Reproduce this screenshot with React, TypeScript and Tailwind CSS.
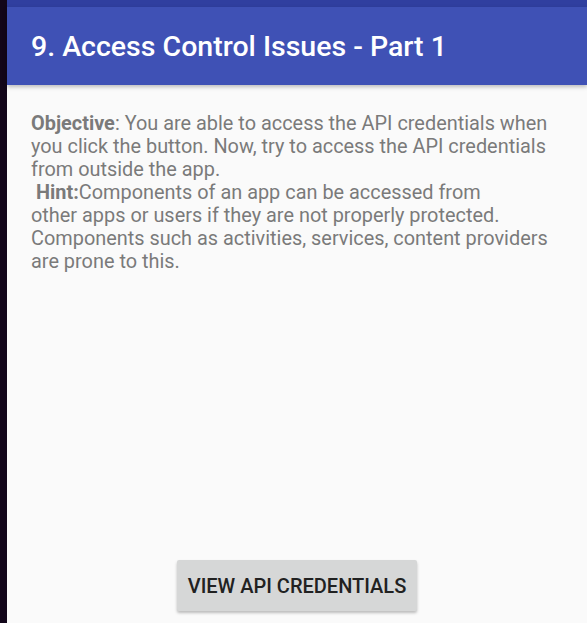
const lines = [
  <><span className="font-bold">Objective</span>: You are able to access the API credentials when</>,
  <>you click the button. Now, try to access the API credentials</>,
  <>from outside the app.</>,
  <>&nbsp;<span className="font-bold">Hint:</span>Components of an app can be accessed from</>,
  <>other apps or users if they are not properly protected.</>,
  <>Components such as activities, services, content providers</>,
  <>are prone to this.</>,
];

const App = () => {
  return (
    <div className="flex h-[623px] w-[587px] overflow-hidden bg-[#fafafa] font-['Roboto',sans-serif]">
      <div className="w-[7px] shrink-0 bg-[#12061a]" />
      <div className="flex flex-1 flex-col">
        <div className="h-[7px] bg-[#303f9f]" />
        <header className="relative z-10 flex h-[78px] items-center bg-[#3f51b5] pl-[24px] pt-[3px] shadow-[0_2px_4px_rgba(0,0,0,0.25)]">
          <h1 className="text-[28.5px] font-medium text-white">9. Access Control Issues - Part 1</h1>
        </header>
        <main className="flex flex-1 flex-col items-center pb-[12px]">
          <div className="w-full pl-[24px] pt-[27px] text-[19.9px] leading-[23px] text-[#7a7a7a]">
            {lines.map((line, i) => (
              <div key={i} className="whitespace-nowrap">{line}</div>
            ))}
          </div>
          <div className="flex-1" />
          <button className="h-[51px] w-[240px] rounded-[2px] bg-[#d6d7d7] text-[20px] font-medium uppercase text-[#212121] shadow-[0_2px_3px_rgba(0,0,0,0.25)]">
            View API Credentials
          </button>
        </main>
      </div>
    </div>
  );
};

export default App;
